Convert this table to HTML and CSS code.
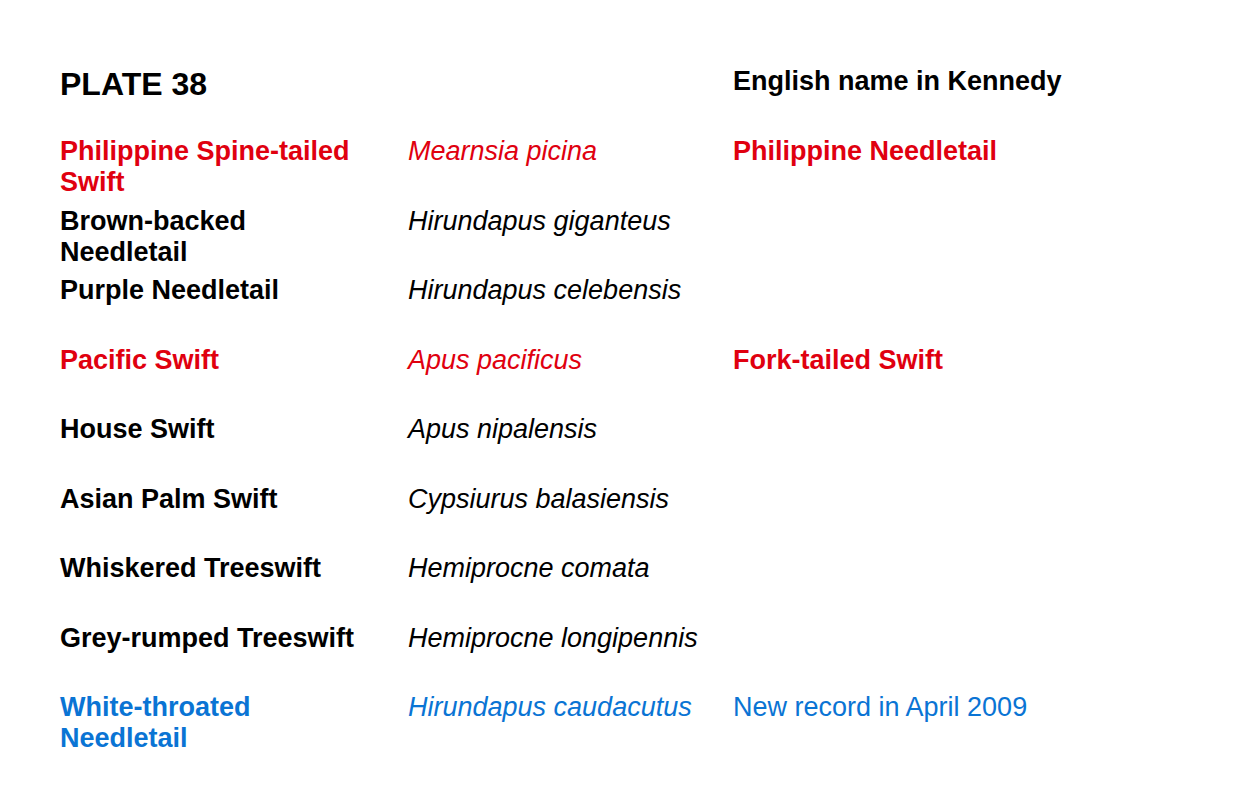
FILE: index.html
```html
<!DOCTYPE html>
<html>
<head>
<meta charset="utf-8">
<link rel="stylesheet" href="styles.css">
</head>
<body>
<div class="plate">
  <div class="head">
    <div class="title">PLATE 38</div>
    <div></div>
    <div class="subhead">English name in Kennedy</div>
  </div>
  <div class="row red">
    <div class="name">Philippine Spine-tailed Swift</div>
    <div class="sci">Mearnsia picina</div>
    <div class="alt">Philippine Needletail</div>
  </div>
  <div class="row">
    <div class="name">Brown-backed Needletail</div>
    <div class="sci">Hirundapus giganteus</div>
    <div class="alt"></div>
  </div>
  <div class="row">
    <div class="name">Purple Needletail</div>
    <div class="sci">Hirundapus celebensis</div>
    <div class="alt"></div>
  </div>
  <div class="row red">
    <div class="name">Pacific Swift</div>
    <div class="sci">Apus pacificus</div>
    <div class="alt">Fork-tailed Swift</div>
  </div>
  <div class="row">
    <div class="name">House Swift</div>
    <div class="sci">Apus nipalensis</div>
    <div class="alt"></div>
  </div>
  <div class="row">
    <div class="name">Asian Palm Swift</div>
    <div class="sci">Cypsiurus balasiensis</div>
    <div class="alt"></div>
  </div>
  <div class="row">
    <div class="name">Whiskered Treeswift</div>
    <div class="sci">Hemiprocne comata</div>
    <div class="alt"></div>
  </div>
  <div class="row">
    <div class="name">Grey-rumped Treeswift</div>
    <div class="sci">Hemiprocne longipennis</div>
    <div class="alt"></div>
  </div>
  <div class="row blue">
    <div class="name">White-throated Needletail</div>
    <div class="sci">Hirundapus caudacutus</div>
    <div class="alt note">New record in April 2009</div>
  </div>
</div>
</body>
</html>
```
FILE: styles.css
```css
html, body {
  margin: 0;
  padding: 0;
  background: #ffffff;
}
body {
  font-family: "Liberation Sans", Arial, sans-serif;
  color: #000000;
}
.plate {
  padding: 66px 0 0 60px;
}
.head, .row {
  display: grid;
  grid-template-columns: 348px 325px 1fr;
}
.head {
  height: 70px;
}
.title {
  font-size: 32px;
  font-weight: bold;
  line-height: 36px;
}
.subhead {
  font-size: 27px;
  font-weight: bold;
  line-height: 31px;
}
.row {
  height: 69.5px;
  font-size: 27px;
  line-height: 31px;
}
.name {
  font-weight: bold;
  max-width: 312px;
}
.sci {
  font-style: italic;
}
.alt {
  font-weight: bold;
}
.alt.note {
  font-weight: normal;
}
.red {
  color: #e0000f;
}
.blue {
  color: #0a74d4;
}
```
